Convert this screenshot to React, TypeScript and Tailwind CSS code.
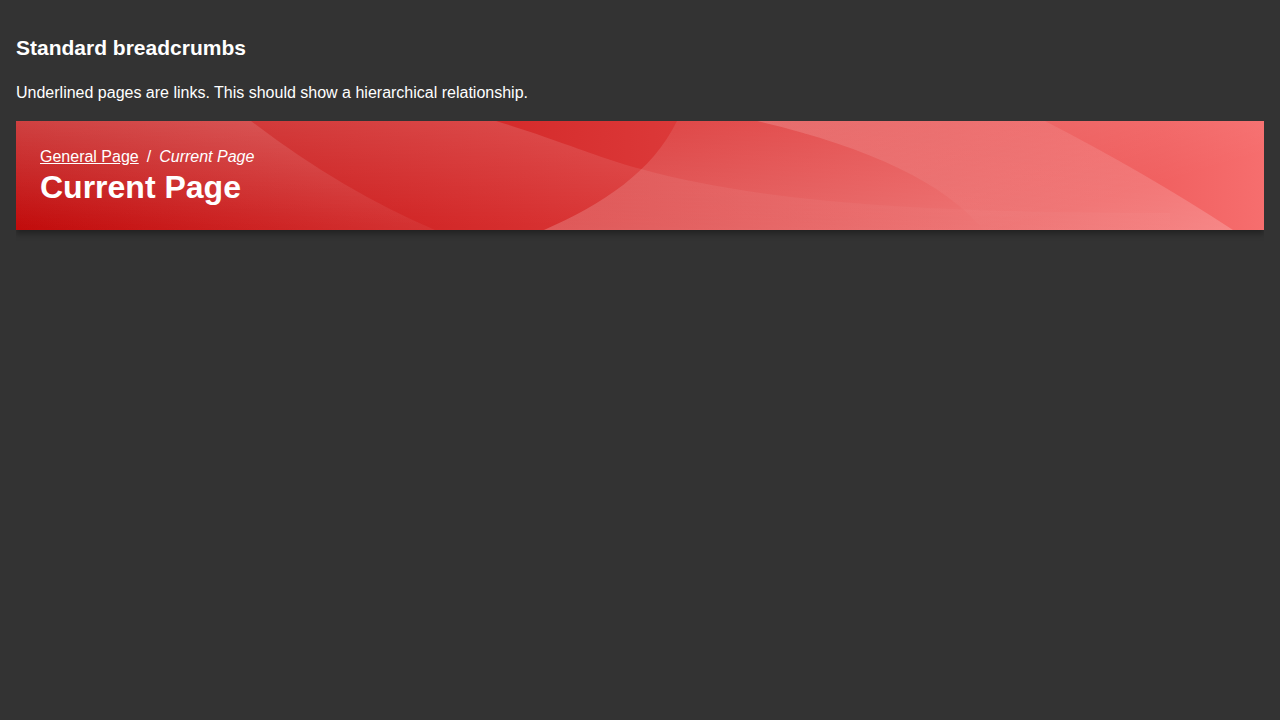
function BannerArt() {
  return (
    <svg
      className="absolute inset-0 h-full w-full"
      viewBox="0 0 1248 109"
      preserveAspectRatio="none"
      aria-hidden="true"
    >
      <defs>
        <linearGradient id="base" gradientUnits="userSpaceOnUse" x1="0" y1="0" x2="1248" y2="0">
          <stop offset="0" stopColor="#c10a0a" />
          <stop offset="0.39" stopColor="#d52b2b" />
          <stop offset="0.53" stopColor="#dc3939" />
          <stop offset="0.92" stopColor="#f16161" />
          <stop offset="1" stopColor="#f66e6e" />
        </linearGradient>
        <linearGradient id="left" gradientUnits="userSpaceOnUse" x1="0" y1="109" x2="22" y2="-56">
          <stop offset="0" stopColor="#fff" stopOpacity="0" />
          <stop offset="1" stopColor="#fff" stopOpacity="0.15" />
        </linearGradient>
        <linearGradient id="sweep" gradientUnits="userSpaceOnUse" x1="0" y1="0" x2="0" y2="104">
          <stop offset="0" stopColor="#fff" stopOpacity="0.14" />
          <stop offset="1" stopColor="#fff" stopOpacity="0.01" />
        </linearGradient>
        <linearGradient id="center" gradientUnits="userSpaceOnUse" x1="0" y1="0" x2="0" y2="109">
          <stop offset="0" stopColor="#fff" stopOpacity="0.08" />
          <stop offset="1" stopColor="#fff" stopOpacity="0.2" />
        </linearGradient>
        <linearGradient id="right" gradientUnits="userSpaceOnUse" x1="741" y1="0" x2="790" y2="167">
          <stop offset="0" stopColor="#fff" stopOpacity="0.17" />
          <stop offset="1" stopColor="#fff" stopOpacity="0" />
        </linearGradient>
      </defs>
      <rect width="1248" height="109" fill="url(#base)" />
      <path d="M0 0H235Q325 69 419 109H0Z" fill="url(#left)" />
      <path d="M0 0H480C540 18 580 36 625 48C740 80 900 92 1154 92V109H0Z" fill="url(#sweep)" />
      <path d="M661 0H1029Q1130 52 1217 109H528C587 83 636 51 661 0Z" fill="url(#center)" />
      <path d="M741 0H1248V109H967C930 62 850 25 741 0Z" fill="url(#right)" />
    </svg>
  );
}

export default function App() {
  return (
    <main className="min-h-screen bg-[#333333] px-4 pt-[34px] font-['Liberation_Sans',Arial,sans-serif] text-base text-white">
      <h3 className="text-[21px] leading-7 font-bold">Standard breadcrumbs</h3>
      <p className="mt-[19px] leading-6">
        Underlined pages are links. This should show a hierarchical relationship.
      </p>
      <header className="relative mt-4 h-[109px] shadow-[0_4px_6px_rgba(0,0,0,0.35)] [clip-path:inset(0_0_-12px_0)]">
        <BannerArt />
        <div className="relative px-6 pt-6">
          <nav aria-label="Breadcrumb">
            <ol className="flex gap-2 leading-6">
              <li>
                <a href="#" className="underline">General Page</a>
              </li>
              <li aria-hidden="true">/</li>
              <li className="italic" aria-current="page">Current Page</li>
            </ol>
          </nav>
          <h1 className="text-[32px] leading-9 font-bold">Current Page</h1>
        </div>
      </header>
    </main>
  );
}
